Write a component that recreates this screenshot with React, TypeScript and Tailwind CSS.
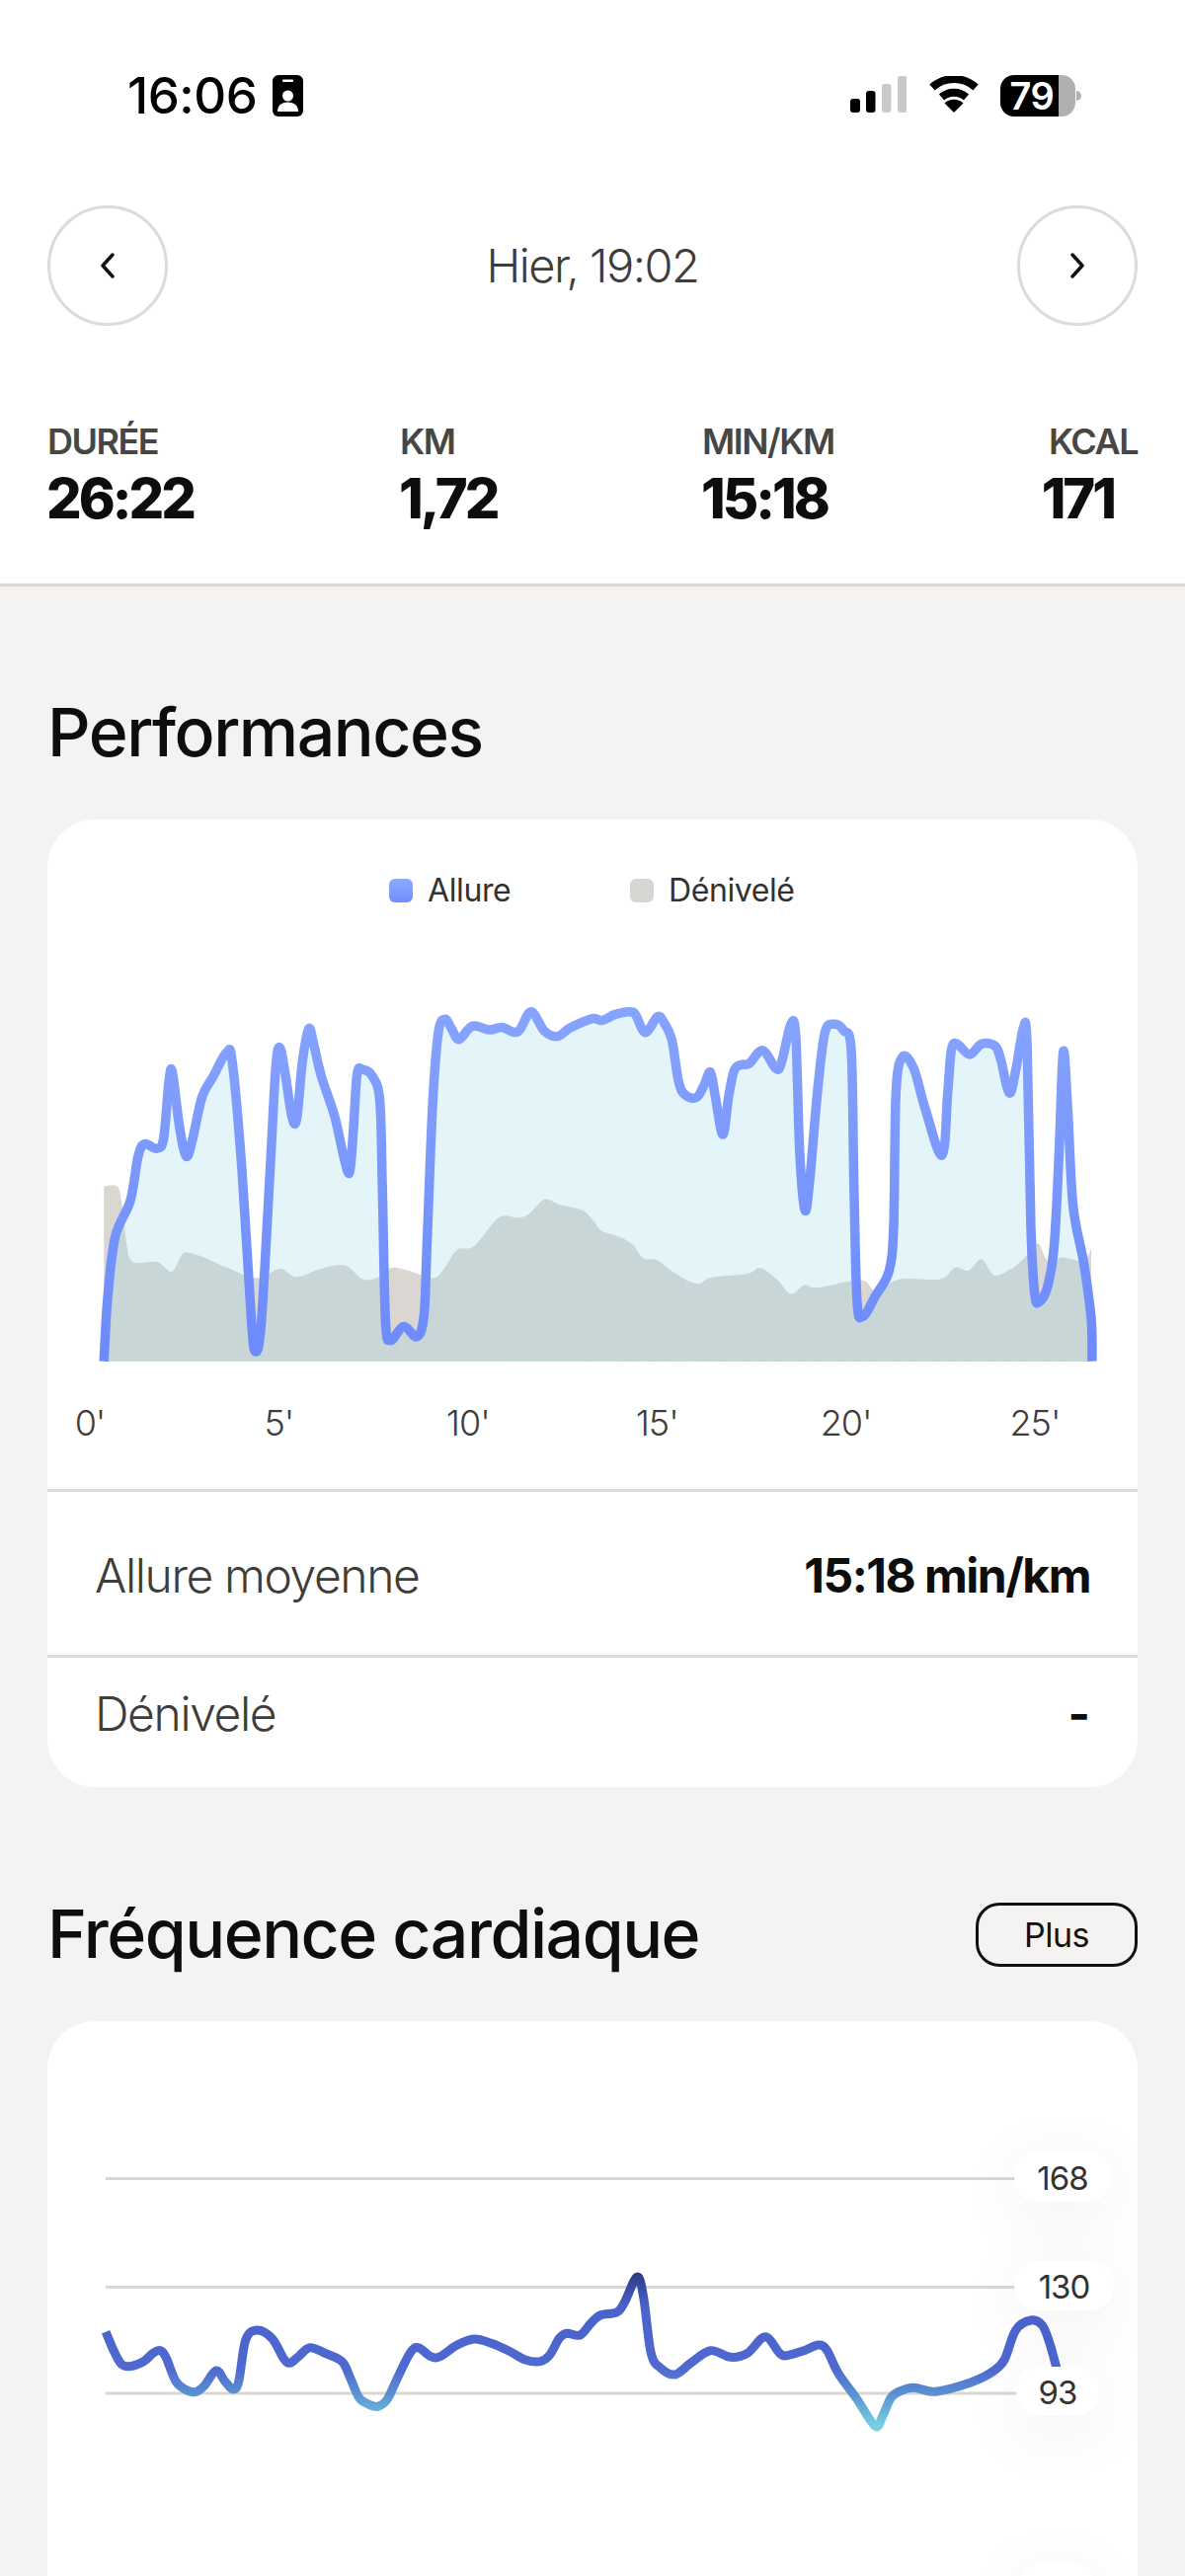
import React from "react";

type Pt = [number, number];

// catmull-rom through traced points, gives a smooth svg path
function smooth(pts: Pt[]) {
  let d = `M${pts[0][0].toFixed(1)} ${pts[0][1].toFixed(1)}`;
  for (let i = 0; i < pts.length - 1; i++) {
    const p0 = pts[i - 1] ?? pts[i];
    const p1 = pts[i];
    const p2 = pts[i + 1];
    const p3 = pts[i + 2] ?? p2;
    const c1x = p1[0] + (p2[0] - p0[0]) / 6;
    const c1y = p1[1] + (p2[1] - p0[1]) / 6;
    const c2x = p2[0] - (p3[0] - p1[0]) / 6;
    const c2y = p2[1] - (p3[1] - p1[1]) / 6;
    d += ` C${c1x.toFixed(1)} ${c1y.toFixed(1)} ${c2x.toFixed(1)} ${c2y.toFixed(1)} ${p2[0].toFixed(1)} ${p2[1].toFixed(1)}`;
  }
  return d;
}

const K = 2.6133;
const BASE = 1379;
// traced in two halves, each half is 600px wide starting at x=0 / x=600
const perf = (left: number[][], right: number[][]): Pt[] => [
  ...left.map(([x, y]) => [x / K, 820 + y / K] as Pt),
  ...right.map(([x, y]) => [600 + x / K, 820 + y / K] as Pt),
];
const hr = (left: number[][], right: number[][]): Pt[] => [
  ...left.map(([x, y]) => [x / K, 2100 + y / 3] as Pt),
  ...right.map(([x, y]) => [600 + x / K, 2100 + y / 3] as Pt),
];

const pace = perf(
  [[275,1460],[285,1290],[305,1130],[345,1035],[365,920],[382,885],[415,897],[433,870],[447,720],[456,695],[475,840],[493,918],[510,870],[535,760],[565,705],[600,642],[615,670],[640,950],[665,1350],[677,1435],[692,1350],[715,950],[730,680],[741,630],[755,700],[772,810],[785,820],[800,670],[817,580],[830,620],[850,705],[885,810],[910,920],[925,960],[935,850],[945,700],[960,688],[985,705],[1005,770],[1012,1000],[1020,1350],[1033,1405],[1068,1368],[1103,1395],[1122,1340],[1130,1150],[1145,780],[1160,590],[1178,555],[1195,580],[1215,608],[1250,573],[1295,583],[1328,576],[1370,588],[1405,535],[1440,585],[1475,600],[1510,577]],
  [[0,553],[25,558],[60,542],[100,535],[115,545],[140,590],[172,548],[190,565],[210,610],[228,720],[245,755],[275,762],[295,730],[312,695],[325,760],[345,860],[360,760],[375,690],[395,675],[415,672],[450,637],[485,685],[500,670],[525,568],[538,600],[548,900],[562,1060],[575,980],[595,750],[615,590],[640,568],[665,585],[685,640],[692,1000],[700,1300],[715,1342],[750,1285],[785,1220],[797,1100],[803,750],[820,655],[850,685],[880,790],[925,915],[940,750],[950,635],[965,620],[998,648],[1030,620],[1065,625],[1080,660],[1103,750],[1120,690],[1140,580],[1150,620],[1160,1100],[1170,1280],[1182,1303],[1205,1260],[1222,1150],[1235,900],[1246,640],[1258,800],[1272,1050],[1300,1200],[1320,1350],[1322,1460]],
);

const elevation = perf(
  [[275,997],[310,997],[322,1040],[335,1150],[345,1190],[365,1200],[415,1197],[440,1215],[457,1222],[480,1180],[495,1172],[540,1185],[600,1212],[680,1240],[740,1215],[785,1237],[850,1215],[915,1207],[960,1243],[1000,1238],[1035,1213],[1080,1220],[1145,1240],[1175,1215],[1210,1165],[1255,1155],[1320,1080],[1370,1080],[1400,1070],[1440,1032],[1480,1045],[1540,1060]],
  [[0,1085],[25,1115],[70,1130],[105,1150],[135,1188],[170,1192],[215,1225],[275,1255],[315,1238],[410,1228],[445,1213],[490,1245],[525,1282],[560,1258],[595,1265],[710,1245],[750,1272],[815,1243],[920,1243],[960,1212],[995,1220],[1030,1190],[1062,1232],[1100,1220],[1140,1190],[1178,1148],[1205,1195],[1245,1185],[1300,1195],[1320,1160]],
);

const heart = hr(
  [[280,785],[300,840],[320,882],[342,890],[380,875],[405,850],[425,842],[440,865],[465,935],[490,960],[517,968],[540,950],[572,903],[595,935],[617,960],[632,935],[650,810],[680,780],[720,805],[750,865],[767,880],[790,860],[820,833],[860,850],[905,875],[925,920],[950,985],[975,1005],[1000,1012],[1025,990],[1050,930],[1085,850],[1107,833],[1140,860],[1165,860],[1210,825],[1255,807],[1300,820],[1350,845],[1390,870],[1430,875],[1455,855],[1480,805],[1500,790],[1535,795]],
  [[-5,760],[20,735],[65,725],[85,695],[118,618],[135,680],[155,850],[180,895],[218,915],[260,880],[312,842],[365,862],[410,850],[457,800],[495,850],[515,857],[560,842],[597,825],[620,840],[650,910],[700,990],[748,1072],[768,1040],[790,985],[815,965],[850,955],[900,967],[950,957],[1010,935],[1060,905],[1090,870],[1120,780],[1160,750],[1190,765],[1210,820],[1228,895]],
);

const stats = [
  { label: "DURÉE", value: "26:22", width: "w-[357px]" },
  { label: "KM", value: "1,72", width: "w-[306px]" },
  { label: "MIN/KM", value: "15:18", width: "w-[200px]" },
];
const ticks = ["0'", "5'", "10'", "15'", "20'", "25'"];
const stripes = Array.from({ length: 77 }, (_, i) => 117 + i * 13.78);

function StatusBar() {
  return (
    <div className="flex items-center justify-between pt-[76px] pl-[129px] pr-[105px]">
      <div className="flex items-center gap-[16px]">
        <span className="text-[51px] leading-[42px] font-medium text-black tracking-[-0.5px]">16:06</span>
        <svg width="31" height="42" viewBox="0 0 31 42">
          <rect width="31" height="42" rx="6" fill="#000" />
          <rect x="10" y="4.5" width="11" height="2.5" rx="1" fill="#fff" />
          <circle cx="15.5" cy="21" r="5.5" fill="#fff" />
          <path d="M5 37c0-6 4-9.500 10.500-9.500S26 31 26 37z" fill="#fff" />
        </svg>
      </div>
      <div className="flex items-center">
        <svg width="57" height="37" viewBox="0 0 57 37" className="mt-[-4px]">
          <rect x="0" y="23" width="10" height="14" rx="3" fill="#000" />
          <rect x="16" y="15" width="9.500" height="22" rx="3" fill="#000" />
          <rect x="32" y="8" width="9.500" height="29" rx="3" fill="#c9c9c9" />
          <rect x="48" y="0" width="9.500" height="37" rx="3" fill="#c9c9c9" />
        </svg>
        <svg width="50" height="37" viewBox="0 0 50 37" className="ml-[23px] mt-[-4px]">
          <path d="M3 11.500A33 33 0 0 1 47 11.500" fill="none" stroke="#000" strokeWidth="8" />
          <path d="M12.500 21.500A19 19 0 0 1 37.500 21.500" fill="none" stroke="#000" strokeWidth="8" />
          <path d="M25 37L15.500 27.500A14 14 0 0 1 34.500 27.500Z" fill="#000" />
        </svg>
        <div className="ml-[22px] flex h-[42px] w-[76px]">
          <div className="flex w-[59px] items-center justify-center rounded-l-[14px] bg-black pl-[5px] text-[38px] leading-[42px] font-semibold tracking-[-0.5px] text-white">79</div>
          <div className="flex-1 rounded-r-[14px] bg-[#b0b0b0]" />
        </div>
        <div className="ml-[1px] h-[10px] w-[5px] rounded-r-full bg-[#b0b0b0]" />
      </div>
    </div>
  );
}

function Chevron({ flip }: { flip?: boolean }) {
  return (
    <svg width="20" height="26" viewBox="0 0 20 26" className={flip ? "rotate-180" : ""}>
      <path d="M15 2L5 13l10 11" fill="none" stroke="#111" strokeWidth="3.500" strokeLinecap="round" strokeLinejoin="round" />
    </svg>
  );
}

function PaceChart() {
  const paceArea = smooth(pace) + ` L${pace[pace.length - 1][0]} ${BASE} Z`;
  const elevArea = smooth(elevation) + ` L${elevation[elevation.length - 1][0]} ${BASE} L${elevation[0][0]} ${BASE} Z`;
  return (
    <svg className="mt-[38px] block" width="1104" height="440" viewBox="48 960 1104 440">
      <defs>
        <linearGradient id="paceStroke" gradientUnits="userSpaceOnUse" x1="0" y1="1020" x2="0" y2="1379">
          <stop offset="0" stopColor="#86a3fe" />
          <stop offset="1" stopColor="#6c8afc" />
        </linearGradient>
        <clipPath id="elevClip"><path d={elevArea} /></clipPath>
        <clipPath id="chartClip"><rect x="48" y="960" width="1104" height={BASE - 960} /></clipPath>
      </defs>
      <path d={elevArea} fill="#dad7d3" />
      <path d={paceArea} fill="#8fd4e8" fillOpacity="0.24" />
      <g clipPath="url(#elevClip)">
        {stripes.map((x) => (
          <line key={x} x1={x} x2={x} y1="1000" y2={BASE} stroke="#fff" strokeOpacity="0.09" strokeWidth="1" />
        ))}
      </g>
      <path d={smooth(pace)} fill="none" stroke="url(#paceStroke)" strokeWidth="9.500" strokeLinejoin="round" clipPath="url(#chartClip)" />
    </svg>
  );
}

function HeartChart() {
  return (
    <svg className="block" width="1104" height="562" viewBox="48 2047 1104 562">
      <defs>
        <linearGradient id="hrStroke" gradientUnits="userSpaceOnUse" x1="0" y1="2302" x2="0" y2="2458">
          <stop offset="0" stopColor="#2b3a86" />
          <stop offset="0.22" stopColor="#4a62cb" />
          <stop offset="0.62" stopColor="#4f69d0" />
          <stop offset="0.78" stopColor="#5a8fd0" />
          <stop offset="1" stopColor="#78d2e4" />
        </linearGradient>
      </defs>
      {[2206.500, 2316.500, 2424].map((y) => (
        <line key={y} x1="107" x2="1030" y1={y} y2={y} stroke="#dad7d2" strokeWidth="3" />
      ))}
      <path d={smooth(heart)} fill="none" stroke="url(#hrStroke)" strokeWidth="9" strokeLinejoin="round" />
    </svg>
  );
}

function Pill({ className, label }: { className: string; label: string }) {
  return (
    <div
      className={`absolute flex h-[50px] items-center justify-center rounded-[24px] bg-white pt-[3px] text-[33px] tracking-[-1px] text-[#333230] shadow-[0_14px_70px_rgba(0,0,0,0.07)] ${className}`}
    >
      {label}
    </div>
  );
}

export default function App() {
  return (
    <div className="h-[2609px] w-[1200px] overflow-hidden bg-[#f4f3f1] [font-family:Inter,sans-serif]">
      {/* Header */}
      <div className="border-b-[3px] border-[#dcd9d4] bg-white pb-[56px]">
        <StatusBar />
        <div className="mt-[90px] flex items-center justify-between px-12">
          <div className="flex h-[122px] w-[122px] items-center justify-center rounded-full border-[3px] border-[#dedbd6]">
            <Chevron />
          </div>
          <span className="text-[47px] font-light tracking-[-1.5px] text-[#3f3d3a]">Hier, 19:02</span>
          <div className="flex h-[122px] w-[122px] items-center justify-center rounded-full border-[3px] border-[#dedbd6]">
            <Chevron flip />
          </div>
        </div>
        <div className="mt-[97px] flex pl-12 pr-12">
          {stats.map((s) => (
            <div key={s.label} className={s.width}>
              <div className="text-[36px] leading-[40px] font-semibold tracking-[-1.5px] text-[#484643]">{s.label}</div>
              <div className="mt-[8px] ml-[-1px] text-[56px] leading-[60px] font-extrabold tracking-[-3px] text-[#0d0d0d]">{s.value}</div>
            </div>
          ))}
          <div className="ml-auto flex flex-col items-end">
            <div className="text-[36px] leading-[40px] font-semibold tracking-[-1.5px] text-[#484643]">KCAL</div>
            <div className="mt-[8px] mr-[24px] text-[56px] leading-[60px] font-extrabold tracking-[-3px] text-[#0d0d0d]">171</div>
          </div>
        </div>
      </div>

      {/* Performances */}
      <div className="px-12">
        <h2 className="mt-[109px] mb-[51px] text-[68px] leading-[76px] font-medium tracking-[-1.5px] text-[#0d0d0d]">Performances</h2>
        <div className="overflow-hidden rounded-[48px] bg-white">
          <div className="flex pt-[52px] pl-[346px] text-[32px] leading-[40px] tracking-[-0.4px] text-[#333230]">
            <div className="flex w-[244px] items-center gap-[15px]">
              <span className="h-[24px] w-[24px] rounded-[6px] bg-gradient-to-b from-[#8fa9ff] to-[#6f8ffc]" />
              Allure
            </div>
            <div className="flex items-center gap-[15px]">
              <span className="h-[24px] w-[24px] rounded-[6px] bg-[#d8d6d2]" />
              Dénivelé
            </div>
          </div>
          <PaceChart />
          <div className="mt-[19px] flex justify-between pr-[74px] pl-[13px] text-[36px] leading-[44px] font-light tracking-[-1px] text-[#3f3d3a]">
            {ticks.map((t) => (
              <span key={t} className="w-[60px] text-center">{t}</span>
            ))}
          </div>
          <div className="mt-[45px] flex h-[168px] justify-between border-t-[3px] border-[#dcdad6] px-12 pt-[57px] text-[48px] leading-[56px]">
            <span className="font-light tracking-[-1.4px] text-[#3f3d3a]">Allure moyenne</span>
            <span className="font-bold tracking-[-1.5px] text-[#0d0d0d]">15:18 min/km</span>
          </div>
          <div className="flex justify-between border-t-[3px] border-[#dcdad6] px-12 pt-[29px] pb-[46px] text-[48px] leading-[56px]">
            <span className="font-light tracking-[-1.4px] text-[#3f3d3a]">Dénivelé</span>
            <span className="font-bold text-[#0d0d0d]">-</span>
          </div>
        </div>

        {/* Fréquence cardiaque */}
        <div className="mt-[112px] flex items-center justify-between">
          <h2 className="mt-[-2px] text-[68px] leading-[76px] font-medium tracking-[-1.5px] text-[#0d0d0d]">Fréquence cardiaque</h2>
          <div className="flex h-[65px] w-[164px] items-center justify-center rounded-[24px] border-[3px] border-[#111] text-[34px] tracking-[-0.5px] text-[#111]">
            Plus
          </div>
        </div>
        <div className="relative mt-[51px] h-[700px] overflow-hidden rounded-[48px] bg-white">
          <HeartChart />
          <Pill className="top-[133px] left-[979px] w-[98px]" label="168" />
          <Pill className="top-[243px] left-[979px] w-[101px]" label="130" />
          <Pill className="top-[350px] left-[981px] w-[84px]" label="93" />
          <Pill className="top-[550px] left-[982px] w-[80px]" label="" />
        </div>
      </div>
    </div>
  );
}
